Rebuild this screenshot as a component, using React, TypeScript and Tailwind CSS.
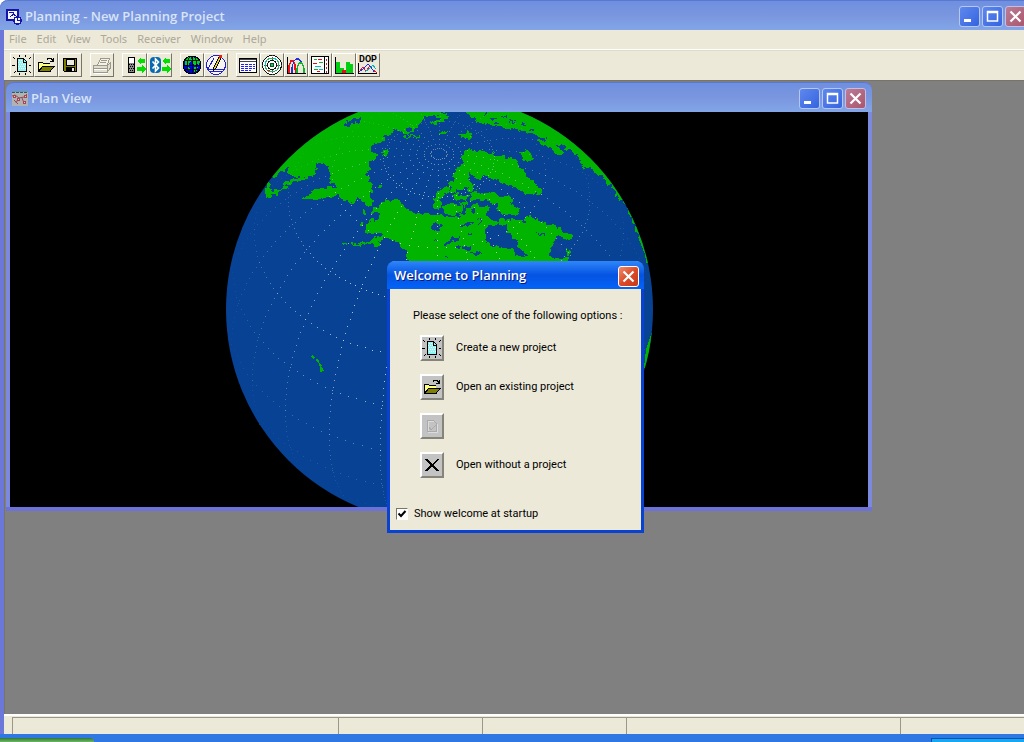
import type { ReactNode } from "react";

const RAD = Math.PI / 180;
const GLOBE = { cx: 428.5, cy: 196.5, r: 213.5, lat: 43.4, lon: -119 };

type Dot = { x: number; y: number; z: number };

function project(lat: number, lon: number): Dot {
  const p = lat * RAD;
  const p0 = GLOBE.lat * RAD;
  const d = (lon - GLOBE.lon) * RAD;
  return {
    x: Math.round(GLOBE.cx + GLOBE.r * Math.cos(p) * Math.sin(d)),
    y: Math.round(GLOBE.cy - GLOBE.r * (Math.cos(p0) * Math.sin(p) - Math.sin(p0) * Math.cos(p) * Math.cos(d))),
    z: Math.sin(p0) * Math.sin(p) + Math.cos(p0) * Math.cos(p) * Math.cos(d),
  };
}

function graticule(): Dot[] {
  const dots: Dot[] = [];
  for (let lon = -180; lon < 180; lon += 15)
    for (let lat = -60; lat <= 86; lat += 2) dots.push(project(lat, lon));
  for (let lat = -45; lat <= 75; lat += 15)
    for (let lon = -180; lon < 180; lon += lat > 50 ? 5 : 2.5) dots.push(project(lat, lon));
  for (let lon = -180; lon < 180; lon += 15) dots.push(project(87.8, lon));
  return dots.filter((d) => d.z > 0.1 && d.y > 0 && d.y < 395);
}

const DOTS = graticule();

function Globe() {
  return (
    <svg viewBox="0 0 858 395" className="block h-full w-full bg-black" preserveAspectRatio="xMidYMid slice" role="img" aria-label="Globe">
      <defs>
        <clipPath id="disc">
          <circle cx="429.5" cy="197.5" r="213.5" />
        </clipPath>
        <filter id="coast" x="0" y="0" width="1" height="1">
          <feTurbulence type="fractalNoise" baseFrequency="0.22" numOctaves="2" seed="4" />
          <feDisplacementMap in="SourceGraphic" scale="7" xChannelSelector="R" yChannelSelector="G" />
        </filter>
      </defs>
      <g clipPath="url(#disc)" shapeRendering="crispEdges">
        <rect width="858" height="395" fill="#084294" />
        <g fill="#00b400" filter="url(#coast)">
          <g transform="translate(210 -4) scale(0.33333)">
            <path d="M412 8L340 36L270 80L220 120L150 205L165 207L182 195L206 176L202 192L222 206L240 200L258 206L280 198L290 180L288 168L300 160L322 172L328 188L326 222L348 226L354 240L320 238L296 242L276 252L262 264L244 270L246 275L296 276L320 268L350 262L366 274L382 276L390 286L404 284L408 270L420 274L424 282L436 280L442 292L452 294L458 288L454 264L456 232L446 224L446 206L438 206L442 190L454 184L446 172L452 158L460 152L478 142L462 138L454 124L462 110L488 100L496 88L512 80L524 66L534 64L546 78L570 76L582 66L596 50L608 46L610 32L632 20L660 12V-30H412Z" />
            <path d="M206 180L240 172L270 168L284 176L276 198L250 206L216 204Z" />
            <path d="M136 240L140 224L150 222L156 248L176 246L186 234L200 230L206 238L196 244L184 248L178 256L158 260L140 274L136 262Z" />
            <path d="M188 226L220 212L254 206L278 196L284 200L262 212L232 222L204 230Z" />
            <path d="M364 404H382V410H366ZM396 406L432 404L452 396L466 388L482 386L492 378L480 374L462 376L450 380L434 368L438 354L450 336L474 334L480 320L456 310L458 298L476 300L484 282L520 276L540 278L548 294L568 306L586 318L612 316L636 320L664 316V470H568L562 432L540 412L524 398L504 392L496 386L476 402L440 408L400 412Z" />
            <path d="M430 306l8 2 -2 8h-6zM474 232h12v4h-12zM478 136L492 126L508 126L506 138L498 150L490 148L492 138ZM546 82H580L600 84V90L576 88L556 88ZM456 408L474 402L478 410L464 416ZM420 348h8v8h-6zM634 44L650 36H670V44L650 48Z" />
            <path d="M556 424L566 432L570 456H560ZM640 300L644 268L650 250L664 250V302Z" />
            <g fill="#084294">
              <path d="M370 52L378 40L392 38L404 32L420 32L418 44L406 40L394 48L386 56ZM378 44l6-6v10zM640 346h10l10 6v14l-14 -2zM300 196l4 3-4 5zM560 66l8-6 6 6-8 4z" />
            </g>
          </g>
          <g transform="translate(420 -4) scale(0.33333)">
            <path d="M96 142L106 128L120 124L134 130L170 130L206 142L240 148L256 154L268 176L284 186L290 204L312 220L338 246L334 258L316 256L304 262L282 254L264 244L246 238L232 228L210 222L200 216L178 206L164 204L152 214L134 210L122 194L104 178L98 164Z" />
            <path d="M108 8V-30H270L360 30L420 70L500 140L560 200L610 280L670 460H650L614 352L590 298L562 264L540 232L512 202L494 192L478 180L462 178L450 162L446 148L426 132L404 118L386 110L366 104L348 92L326 86L310 76L288 72L262 64L234 62L210 54L176 50L164 46L140 42L144 32L124 28L116 20Z" />
            <path d="M318 100L330 96L344 100L352 94L366 98L378 112L390 122L402 134L398 142L382 138L368 130L364 118L352 116L334 112Z" />
            <path d="M270 132L280 134L288 126L298 136L308 142L304 158L294 162L280 156L276 144Z" />
            <path d="M84 78L102 76L110 70L120 78L130 80L124 90L110 94L98 88ZM20 72L36 70L56 68V76L24 78ZM0 14H34L54 20L48 32L30 40L4 48L2 42L28 34L38 26L18 24L0 24ZM44 0L50 12H30Z" />
            <path d="M72 202L78 184L92 176L104 170L110 182L120 186L122 200L116 214L120 224L132 232L130 244L120 250L112 240L104 238L96 246L84 246L72 258L60 252L64 238L56 230L60 218L74 214Z" />
            <path d="M18 260L26 246L44 238L60 234L56 252L46 256L44 268L28 272ZM60 262L78 258L92 262L106 258L118 266L106 276L86 276L70 272ZM10 282L24 272L38 278L34 292L22 306L10 300ZM36 296L60 286L82 288L98 298L100 312L84 320L58 322L40 314ZM86 282L108 280L116 292L104 298Z" />
            <path d="M122 256L140 250L160 256L190 254L210 264L248 266L250 282L236 288L250 292L268 304L266 320L248 322L232 316L218 318L204 304L196 292L180 282L162 278L140 274L124 276Z" />
            <path d="M-6 320L18 316L34 322L54 330L80 328L102 318L114 302L126 290L142 284L150 296L162 300L174 284L182 306L170 318L176 332L198 340L222 330L230 342L218 354L206 348L192 354L176 350L166 364L164 388L176 406L196 418L232 420L252 428L264 444L276 452L288 446L284 432L264 418L262 402L248 390L242 374L230 366L226 342L240 334L258 332L276 336L288 324L306 330L326 336L342 348L360 352L374 350L390 364L400 376L416 374L432 384L426 392L412 398L400 392L386 384L378 392L374 410L362 420L360 440L366 452H408L414 430L406 420L420 424L412 460L410 480H-6Z" />
            <path d="M378 366l12-14 4 10-8 10z" />
            <g fill="#084294">
              <path d="M4 346L18 340L36 350L30 362L16 372L8 364ZM40 410L60 394L78 388L92 378L86 394L66 402L52 412ZM94 350L110 344L130 342L124 350L104 358ZM72 420L96 416L124 418L120 426L98 422ZM110 378l16 -8-6 14zM120 436l20-4 18 4-22 6zM12 398l12-10-4 14zM40 448l12-8 6 6zM366 416L380 392L392 410L404 430L392 440L378 422ZM280 336l12 6-4 8-8-4zM322 376l24 0v5h-20zM128 300l8 10-10 6zM144 330l10 6-6 12z" />
              <path d="M180 28l16 2-6 6-12-3zM214 22l18 4-4 5-14-4zM240 36l22 6-4 4-20-5zM160 20l10-4 4 6zM276 46l14 6-4 4-12-5zM196 42l14 2-4 5zM300 60l14 6-6 3z" />
            </g>
          </g>
        </g>
        <path d="M302 243l3 2-1 2-3-2zM306 247l3 1v3l-3-2zM309 251l3 2-1 2-2-1zM310 255l3 1 1 3-4 1zM642 220L636 238L634 256L640 250ZM245 308l4 6-2 2zM247 312h3v3h-3z" fill="#00b400" />
        {DOTS.map((d, i) => (
          <rect key={i} x={d.x} y={d.y} width="1" height="1" fill="#d8dcc8" opacity={Math.min(0.85, d.z * d.z)} />
        ))}
      </g>
    </svg>
  );
}

function Icon({ children, box = "0 0 24 24", className = "h-6 w-6" }: { children: ReactNode; box?: string; className?: string }) {
  return (
    <svg viewBox={box} className={`block shrink-0 ${className}`} shapeRendering="crispEdges" fill="none" aria-hidden="true">
      {children}
    </svg>
  );
}

function NewIcon() {
  return (
    <Icon>
      <path d="M7.5 5.5h6l3 3v10h-9z" fill="#8ff4f4" stroke="#000" />
      <path d="M9 7h1v1h-1zM11 7h1v1h-1zM8 9h1v1h-1zM10 9h1v1h-1zM12 9h1v1h-1zM9 11h1v1h-1zM11 11h1v1h-1zM13 11h1v1h-1zM15 11h1v1h-1zM8 13h1v1h-1zM10 13h1v1h-1zM12 13h1v1h-1zM14 13h1v1h-1zM9 15h1v1h-1zM11 15h1v1h-1zM13 15h1v1h-1zM15 15h1v1h-1z" fill="#fff" />
      <path d="M13.5 6v3h3" stroke="#000" />
      <path d="M2 12.5h3M19 12.5h2" stroke="#000" />
      <path d="M3 4h1v1h1v1h-1v-1h-1zM20 4h1v1h-1v1h-1v-1h1zM4 19h1v-1h1v1h-1v1h-1zM19 18h1v1h1v1h-1v-1h-1zM9 2h1v2h-1zM15 2h1v2h-1zM9 20h1v2h-1zM15 20h1v2h-1z" fill="#000" />
    </Icon>
  );
}

function OpenIcon() {
  return (
    <Icon>
      <path d="M4.5 18.5v-9h4l1 1h6v3" fill="#ffff70" stroke="#000" />
      <path d="M5 18l4-5h7v-2H9l-1-1H5z" fill="#ffff80" />
      <path d="M4.5 18.5l4-5h11.5l-4 5z" fill="#808000" stroke="#000" />
      <path d="M12.5 6.5h1v-1h4v1h1v2M16 8.5h3M19.5 5v4" stroke="#000" />
    </Icon>
  );
}

function SaveIcon() {
  return (
    <Icon>
      <path d="M5.5 5.5h13v13h-12l-1-1z" fill="#808000" stroke="#000" />
      <path d="M8 6h8v6H8z" fill="#ecebe0" stroke="#000" strokeWidth="1" />
      <path d="M8 14h9v5H8z" fill="#000" />
      <path d="M14 15h2v3h-2z" fill="#ecebe0" />
    </Icon>
  );
}

function PrintIcon() {
  return (
    <Icon>
      <path d="M7.5 12.5l3-7h9l-2.500 7" fill="#f4f2e6" stroke="#9a998c" />
      <path d="M3.500 12.500h14l3-2.500v5l-3 4h-14z" fill="#e0decf" stroke="#9a998c" />
      <path d="M11 7.500h6M10 9.500h6M4 15.500h13M17.500 13v6" stroke="#9a998c" />
      <path d="M4 16.500h13M4 20.500h14" stroke="#fff" />
    </Icon>
  );
}

function Arrows() {
  return (
    <>
      <path d="M14 8l4-4v2h4v4h-4v2z" fill="#00e000" />
      <path d="M23 16l-4-4v2h-5v4h5v2z" fill="#00e000" />
    </>
  );
}

function DeviceIcon() {
  return (
    <Icon>
      <path d="M5.5 4.500h6v15h-6z" fill="#fff" stroke="#000" />
      <path d="M6 10h5v9H6z" fill="#888" />
      <path d="M6 11h1v1h-1zM8 11h1v1h-1zM10 11h1v1h-1zM7 13h1v1h-1zM9 13h1v1h-1zM6 15h1v1h-1zM8 15h1v1h-1zM10 15h1v1h-1zM7 17h1v1h-1zM9 17h1v1h-1z" fill="#000" />
      <Arrows />
    </Icon>
  );
}

function BluetoothIcon() {
  return (
    <Icon>
      <rect x="2" y="4" width="11" height="16" rx="4" fill="#0868b0" shapeRendering="auto" />
      <path d="M4.500 8.500l6 6.500-3 3V6l3 3-6 6.500" stroke="#fff" strokeWidth="1.600" shapeRendering="auto" />
      <Arrows />
    </Icon>
  );
}

function WorldIcon() {
  return (
    <Icon>
      <circle cx="12" cy="12" r="9" fill="#0000e0" stroke="#000" />
      <path d="M5 7l3-3 3 0 1 3-3 3v3l-4-1zM13 4l4 1 3 4-1 3-3-1-2 2-1-4zM14 14h4l-2 5h-2zM7 14l3 1-1 4-2-2z" fill="#00d020" />
      <path d="M3 12h18M12 3v18M5 7.500h14M5 16.500h14" stroke="#000" strokeWidth="0.800" />
      <ellipse cx="12" cy="12" rx="5" ry="9" stroke="#000" strokeWidth="0.800" />
    </Icon>
  );
}

function CompassIcon() {
  return (
    <Icon>
      <circle cx="12" cy="12" r="9.500" fill="#f6f5ee" stroke="#2020d0" />
      <path d="M10 5L4 16h16M2 12l2 4M20 16l2-2M6 18.500h12" stroke="#2020d0" />
      <path d="M15 4l-5 10-.500 3 2.500-2 5-10z" fill="#f0d020" stroke="#000" />
      <path d="M15 2h3v3h-3z" fill="#e02010" />
    </Icon>
  );
}

function TableIcon() {
  return (
    <Icon>
      <path d="M3.500 5.500h17v14h-17z" fill="#fff" stroke="#000" />
      <path d="M4 6.500h16M4 8.500h16" stroke="#444" />
      <path d="M5 11.500h14M5 13.500h14M5 15.500h14M5 17.500h10" stroke="#2020f8" strokeDasharray="3 1" />
    </Icon>
  );
}

function SkyIcon() {
  return (
    <Icon>
      <circle cx="12" cy="12" r="9.500" fill="#fff" stroke="#111" />
      <circle cx="12" cy="12" r="7" stroke="#30b060" />
      <circle cx="12" cy="12" r="4.500" stroke="#111" />
      <circle cx="12" cy="12" r="2" fill="#20c060" stroke="#105020" />
      <path d="M12 2v5M12 17v5M2 12h5M17 12h5" stroke="#555" strokeDasharray="1 1" />
      <path d="M14 5l3 2M6 8l-1 4" stroke="#00c8c8" />
      <path d="M7 17l3 1" stroke="#e02020" />
    </Icon>
  );
}

function ElevationIcon() {
  return (
    <Icon>
      <path d="M3.500 4v16.500h18" stroke="#000" />
      <path d="M5 20v-7l2-5h2l2 4v4l1 4" stroke="#f01010" strokeWidth="1.500" />
      <path d="M8 20v-6l2-6 2-2h3l3 4 2 5v5" stroke="#2030e0" strokeWidth="1.200" />
      <path d="M13 20v-5l2-5h3l2 5v5" stroke="#10b030" strokeWidth="1.200" />
    </Icon>
  );
}

function VisibilityIcon() {
  return (
    <Icon>
      <path d="M3.500 3.500h17v17h-17z" fill="#fff" stroke="#000" />
      <path d="M16.500 4v16" stroke="#000" />
      <path d="M6 6.500h3M11 9.500h4M6 16.500h4" stroke="#10b030" strokeWidth="1.500" />
      <path d="M10 6.500h4M5 10.500h4M9 18.500h3" stroke="#e01010" />
      <path d="M7 13.500h6M11 16.500h4" stroke="#00c0d0" />
      <path d="M18.500 6v14" stroke="#c02020" strokeDasharray="2 2" />
    </Icon>
  );
}

function BarsIcon() {
  return (
    <Icon>
      <path d="M3.500 4v16.500h18" stroke="#000" />
      <path d="M4 9h4v6h4v2h2V9h4v2h3v9H4z" fill="#00d010" />
      <path d="M10 17h4v3h-4z" fill="#e01010" />
    </Icon>
  );
}

function DopIcon() {
  return (
    <div className="relative h-6 w-6">
      <Icon>
        <path d="M2.500 10v10.500h18" stroke="#000" />
        <path d="M3 19l4-5 3 4 4-5 3 4 4 3" stroke="#f01030" />
        <path d="M4 18l3-2 5-5 3 3 3 5" stroke="#2030e0" />
        <path d="M9 19l4-3 4-4 3 4" stroke="#00b8c0" />
      </Icon>
      <span className="absolute inset-x-0 top-0.5 text-center font-['Roboto'] text-[9px] leading-2 font-bold text-black">DOP</span>
    </div>
  );
}

function CrossIcon() {
  return (
    <Icon>
      <path d="M5 6h2l5 5 5-5h2v1l-5.500 5 5 5v1h-2L12 13.500 7.500 18H5v-1l5.500-5L5 7z" fill="#000" />
    </Icon>
  );
}

function DocumentIcon() {
  return (
    <Icon>
      <path d="M8.500 7.500h6l3 3v8h-9z" stroke="#dcdcdc" />
      <path d="M7.500 6.500h6l3 3v8h-9zM9 13l2 3 5-5" stroke="#aaaaaa" />
    </Icon>
  );
}

function AppIcon() {
  return (
    <Icon box="0 0 16 16" className="h-4 w-4">
      <path d="M1 1h11v10H1z" fill="#f4f6ff" stroke="#1414a8" strokeWidth="2" />
      <path d="M3 3h4v2l3 2M4 8l4-3" stroke="#1414a8" />
      <circle cx="11.500" cy="11.500" r="3.600" fill="#f4f6ff" stroke="#1414a8" strokeWidth="1.500" />
      <path d="M11.500 9v2.500h2" stroke="#1414a8" />
    </Icon>
  );
}

function PlanIcon() {
  return (
    <Icon box="0 0 16 16" className="h-4 w-4">
      <path d="M0 0h16v15H0z" fill="#b0b3b2" />
      <path d="M0 0h16v1H0z" fill="#5fa0a8" />
      <path d="M0 1.500h16" stroke="#2f5f68" strokeDasharray="3 1" />
      <path d="M0 5l3-1 4 3 5-1 3-3M4 12l2-4M10 7l2 5M2 9l4 4" stroke="#9a4858" shapeRendering="auto" />
      <path d="M1.500 4.500h2v2h-2zM5.500 7.500h2v2h-2zM12.500 4.500h2v2h-2zM11.500 10.500h2v2h-2z" fill="#d8c8cc" stroke="#a84454" />
    </Icon>
  );
}

function CaptionButton({ kind, active = false }: { kind: "Minimize" | "Maximize" | "Close"; active?: boolean }) {
  const tone =
    kind !== "Close"
      ? "border-[#b4c8f2] bg-linear-to-br from-[#5f88ee] to-[#3563df]"
      : active
        ? "border-white bg-linear-to-br from-[#ee8a6c] via-[#dc4a26] to-[#c43a16]"
        : "border-[#c3bfe4] bg-linear-to-br from-[#bb7c98] to-[#a9566c]";
  return (
    <button type="button" aria-label={kind} className={`h-[21px] w-[21px] shrink-0 rounded-[3px] border ${tone}`}>
      <svg viewBox="0 0 19 19" className="block h-full w-full" fill="none" stroke="#fff" aria-hidden="true">
        {kind === "Minimize" && <path d="M4 13.500h7" strokeWidth="3" />}
        {kind === "Maximize" && <path d="M4.500 4.500h10v9.500h-10zM4 5.500h11" strokeWidth="1.500" />}
        {kind === "Close" && <path d="M4.500 4.500l10 10M14.500 4.500l-10 10" strokeWidth="2.200" />}
      </svg>
    </button>
  );
}

function ToolButton({ label, wide = false, disabled = false, children }: { label: string; wide?: boolean; disabled?: boolean; children: ReactNode }) {
  return (
    <button
      type="button"
      aria-label={label}
      disabled={disabled}
      className={`flex h-6 shrink-0 items-center justify-center overflow-hidden border border-t-white border-r-[#77756a] border-b-[#77756a] border-l-white ${wide ? "w-[25px]" : "w-6"}`}
    >
      {children}
    </button>
  );
}

const MENU = ["File", "Edit", "View", "Tools", "Receiver", "Window", "Help"];

const OPTIONS = [
  { name: "Create a new project", label: "Create a new project", icon: <NewIcon />, disabled: false },
  { name: "Open an existing project", label: "Open an existing project", icon: <OpenIcon />, disabled: false },
  { name: "Unavailable", label: "", icon: <DocumentIcon />, disabled: true },
  { name: "Open without a project", label: "Open without a project", icon: <CrossIcon />, disabled: false },
];

const INACTIVE_BAR = "bg-linear-to-b from-[#6f90e0] via-[#7a96df] to-[#82a6e8]";
const TITLE = "font-['Open_Sans',sans-serif] text-[13px] font-semibold";

function PlanWindow() {
  return (
    <section className="absolute top-px left-px flex h-[429px] w-[866px] flex-col rounded-t-lg border-b-4 border-[#6d72d8] bg-[#7b8ade] px-1">
      <header className={`-mx-1 flex h-[30px] shrink-0 items-center gap-[3px] rounded-t-lg border-t border-[#5b78d0] px-1.5 pt-0.5 ${INACTIVE_BAR}`}>
        <PlanIcon />
        <h2 className={`flex-1 text-[#d8e4f8] ${TITLE}`}>Plan View</h2>
        <div className="flex gap-0.5">
          <CaptionButton kind="Minimize" />
          <CaptionButton kind="Maximize" />
          <CaptionButton kind="Close" />
        </div>
      </header>
      <div className="min-h-0 flex-1">
        <Globe />
      </div>
    </section>
  );
}

function WelcomeDialog() {
  return (
    <section
      role="dialog"
      aria-label="Welcome to Planning"
      className="absolute top-[261px] left-[387px] w-[257px] rounded-t-lg border-x-3 border-b-3 border-[#0842d2] bg-[#ece9d8]"
    >
      <header className="-mx-[3px] flex h-7 items-center justify-between rounded-t-lg bg-linear-to-b from-[#2f86fa] via-[#0553e2] to-[#0364f8] pt-0.5 pr-[5px] pl-[7px]">
        <h2 className={`text-white [text-shadow:1px_1px_#0a1c80] ${TITLE}`}>Welcome to Planning</h2>
        <CaptionButton kind="Close" active />
      </header>
      <div className="flex h-[241px] flex-col font-['Roboto',sans-serif] text-[11px] leading-4 text-black">
        <p className="mt-[19px] pl-[23px]">Please select one of the following options :</p>
        <ul className="mt-[11px] flex flex-col gap-[13px] pl-[30px]">
          {OPTIONS.map((o) => (
            <li key={o.name} className="flex items-center gap-3">
              <button
                type="button"
                aria-label={o.name}
                disabled={o.disabled}
                className="flex h-[26px] w-6 items-center justify-center overflow-hidden border-2 border-t-white border-r-[#85847a] border-b-[#85847a] border-l-white bg-[#c3c3c3]"
              >
                {o.icon}
              </button>
              <span>{o.label}</span>
            </li>
          ))}
        </ul>
        <label className="mt-auto mb-2 flex items-center gap-1.5 pl-1.5">
          <span className="relative flex h-3 w-3">
            <input
              type="checkbox"
              defaultChecked
              className="peer h-3 w-3 appearance-none border border-t-[#77756a] border-r-white border-b-white border-l-[#77756a] bg-white"
            />
            <svg viewBox="0 0 12 12" className="pointer-events-none absolute inset-0 hidden h-3 w-3 peer-checked:block" fill="none" stroke="#000" strokeWidth="2" aria-hidden="true">
              <path d="M2.500 5.500l2.500 2.500 4.500-5" />
            </svg>
          </span>
          Show welcome at startup
        </label>
      </div>
    </section>
  );
}

export default function App() {
  return (
    <div className="relative flex h-screen flex-col overflow-hidden bg-white font-['Noto_Sans',sans-serif]">
      <main className="flex min-h-0 flex-1 flex-col rounded-tl-lg border-l-4 border-[#6b78da] bg-[#ece9d8]">
        <header className={`-mr-0.5 -ml-1 flex h-[30px] shrink-0 items-center gap-[3px] rounded-tl-lg border-t border-[#5b78d0] pt-0.5 pl-1.5 ${INACTIVE_BAR}`}>
          <AppIcon />
          <h1 className={`flex-1 text-[#d8e4f8] ${TITLE}`}>Planning - New Planning Project</h1>
          <div className="flex gap-0.5">
            <CaptionButton kind="Minimize" />
            <CaptionButton kind="Maximize" />
            <CaptionButton kind="Close" />
          </div>
        </header>
        <nav className="flex h-5 shrink-0 items-center gap-2.5 border-b border-white pl-[5px] text-[11px] text-[#aca899]">
          {MENU.map((m) => (
            <button key={m} type="button">
              {m}
            </button>
          ))}
        </nav>
        <div role="toolbar" aria-label="Toolbar" className="flex h-[31px] shrink-0 items-center gap-2 border-t border-b border-t-[#e0dccb] border-b-[#77756a] pb-0.5 pl-1.5">
          <div className="flex">
            <ToolButton label="New"><NewIcon /></ToolButton>
            <ToolButton label="Open"><OpenIcon /></ToolButton>
            <ToolButton label="Save"><SaveIcon /></ToolButton>
          </div>
          <ToolButton label="Print" disabled><PrintIcon /></ToolButton>
          <div className="flex">
            <ToolButton label="Receiver" wide><DeviceIcon /></ToolButton>
            <ToolButton label="Bluetooth" wide><BluetoothIcon /></ToolButton>
          </div>
          <div className="flex">
            <ToolButton label="World"><WorldIcon /></ToolButton>
            <ToolButton label="Compass"><CompassIcon /></ToolButton>
          </div>
          <div className="flex">
            <ToolButton label="Table"><TableIcon /></ToolButton>
            <ToolButton label="Sky plot"><SkyIcon /></ToolButton>
            <ToolButton label="Elevation"><ElevationIcon /></ToolButton>
            <ToolButton label="Visibility"><VisibilityIcon /></ToolButton>
            <ToolButton label="Satellites"><BarsIcon /></ToolButton>
            <ToolButton label="Dilution"><DopIcon /></ToolButton>
          </div>
        </div>
        <div className="relative min-h-0 flex-1 border-l border-[#77756a] bg-[#808080]">
          <PlanWindow />
        </div>
        <footer className="flex h-5 shrink-0 border-t-2 border-white pt-px pl-2">
          <div className="w-[326px] border-t border-l border-[#99968a]" />
          <div className="w-36 border-t border-l border-[#99968a]" />
          <div className="w-36 border-t border-l border-[#99968a]" />
          <div className="w-[274px] border-t border-l border-[#99968a]" />
          <div className="flex-1 border-t border-l border-[#99968a]" />
        </footer>
      </main>
      <div className="flex h-2 shrink-0 items-end justify-between bg-[#2f78e4]">
        <div className="h-1 w-[94px] rounded-tr bg-linear-to-b from-[#2f7a2c] to-[#6cb868]" />
        <div className="h-1 w-[93px] border-t border-l border-[#0a50b0] bg-[#14a8f0]" />
      </div>
      <WelcomeDialog />
    </div>
  );
}
